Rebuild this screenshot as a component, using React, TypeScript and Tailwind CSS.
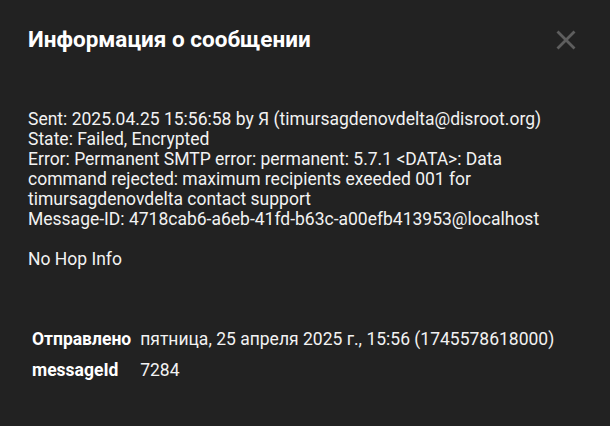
import React from "react";

const rows = [
  { label: "Отправлено", value: "пятница, 25 апреля 2025 г., 15:56 (1745578618000)" },
  { label: "messageId", value: "7284" },
];

export default function App() {
  return (
    <div className="w-[610px] h-[426px] bg-[#222222] text-[#f2f2f2] font-['Roboto',sans-serif] overflow-hidden">
      <div className="flex items-center justify-between pl-[28px] pr-[34px] h-[80px]">
        <h1 className="text-[22.5px] font-bold text-white">Информация о сообщении</h1>
        <button className="w-[20px] h-[20px] flex items-center justify-center">
          <svg width="20" height="20" viewBox="0 0 20 20" fill="none" stroke="#5e5e5e" strokeWidth="2.8">
            <path d="M1.5 1.5 L18.5 18.5 M18.5 1.5 L1.5 18.5" />
          </svg>
        </button>
      </div>
      <div className="px-[28px] pt-[30px] text-[17.5px] leading-[19.9px]">
        <p>Sent: 2025.04.25 15:56:58 by Я (timursagdenovdelta@disroot.org)</p>
        <p>State: Failed, Encrypted</p>
        <p>
          Error: Permanent SMTP error: permanent: 5.7.1 &lt;DATA&gt;: Data
          <br />
          command rejected: maximum recipients exeeded 001 for
          <br />
          timursagdenovdelta contact support
        </p>
        <p>Message-ID: 4718cab6-a6eb-41fd-b63c-a00efb413953@localhost</p>
        <p className="mt-[21px]">No Hop Info</p>
      </div>
      <table className="ml-[30px] mt-[53px] text-[17.5px] border-separate border-spacing-x-[2px] border-spacing-y-0">
        <tbody>
          {rows.map((r) => (
            <tr key={r.label} className="h-[31px]">
              <td className="font-bold pr-[7px] text-white">{r.label}</td>
              <td>{r.value}</td>
            </tr>
          ))}
        </tbody>
      </table>
    </div>
  );
}
